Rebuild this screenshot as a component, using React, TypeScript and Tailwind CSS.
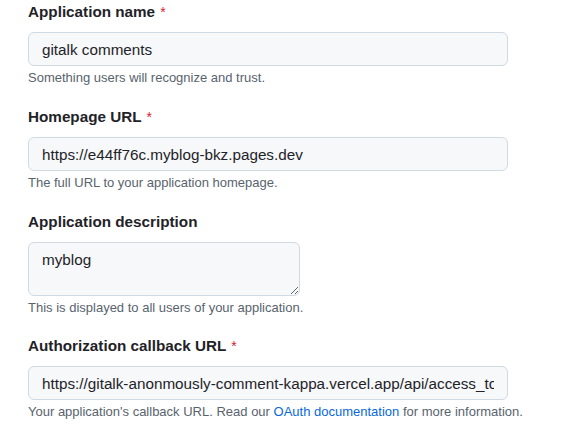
import React from "react";

const font = { fontFamily: '"Liberation Sans", Arial, Helvetica, sans-serif' };

function Label({ text, required }: { text: string; required?: boolean }) {
  return (
    <label className="block text-[15.25px] leading-[23px] font-bold text-[#1f2328]">
      {text}
      {required && (
        <>
          {" "}
          <span className="ml-[1px] font-normal text-[14px] leading-[20px] text-[#d1242f]">*</span>
        </>
      )}
    </label>
  );
}

function Note({ children }: { children: React.ReactNode }) {
  return <p className="mt-[2px] text-[13px] leading-[20px] text-[#59636e]">{children}</p>;
}

const inputCls =
  "mt-[9px] block h-[34px] w-[480px] rounded-[6px] border border-[#d1d9e0] bg-[#f6f8fa] px-[13px] text-[15.25px] text-[#1f2328] outline-none";

export default function App() {
  return (
    <div className="bg-white w-[576px] h-[439px] overflow-hidden pl-[28px]" style={font}>
      <div className="mb-[17px]">
        <Label text="Application name" required />
        <input readOnly className={inputCls} style={font} defaultValue="gitalk comments" />
        <Note>Something users will recognize and trust.</Note>
      </div>
      <div className="mb-[17px]">
        <Label text="Homepage URL" required />
        <input readOnly className={inputCls} style={font} defaultValue="https://e44ff76c.myblog-bkz.pages.dev" />
        <Note>The full URL to your application homepage.</Note>
      </div>
      <div className="mb-[16px]">
        <Label text="Application description" />
        <textarea
          readOnly
          className="mt-[9px] block h-[54px] w-[272px] rounded-[6px] border border-[#d1d9e0] bg-[#f6f8fa] px-[13px] py-[7px] text-[15.25px] leading-[20px] text-[#1f2328] outline-none"
          style={font}
          defaultValue="myblog"
        />
        <Note>This is displayed to all users of your application.</Note>
      </div>
      <div>
        <Label text="Authorization callback URL" required />
        <input
          readOnly
          className={inputCls}
          style={font}
          defaultValue="https://gitalk-anonmously-comment-kappa.vercel.app/api/access_token"
        />
        <Note>
          Your application's callback URL. Read our{" "}
          <a className="text-[#0969da]" href="#">
            OAuth documentation
          </a>{" "}
          for more information.
        </Note>
      </div>
    </div>
  );
}
